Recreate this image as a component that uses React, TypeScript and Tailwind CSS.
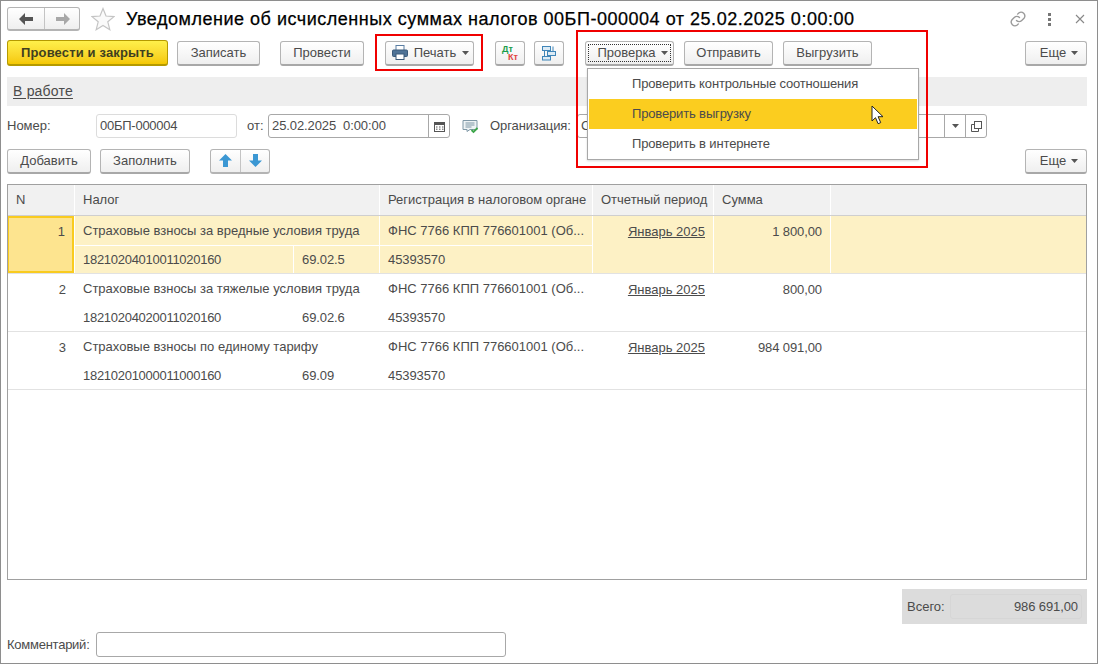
import React from "react";

const Btn = ({ w, children, className = "" }: { w: string; children: React.ReactNode; className?: string }) => (
  <div className={`${w} h-[25px] shrink-0 flex items-center justify-center rounded-[3px] border border-[#b4b4b4] border-b-[2px] border-b-[#a8a8a8] bg-linear-to-b from-white to-[#efefef] text-[#4b4b4b] text-[13px] ${className}`}>
    {children}
  </div>
);
const Caret = ({ className = "ml-[6px]" }: { className?: string }) => (
  <svg width="7" height="4" viewBox="0 0 7 4" className={className}><path d="M0 0h7L3.5 4z" fill="#555" /></svg>
);

const Row = ({ n, name, code, acc, sum, selected }: { n: string; name: string; code: string; acc: string; sum: string; selected?: boolean }) => {
  const bg = selected ? "bg-[#fdf1c5]" : "bg-white";
  const cell = `${bg} flex items-center px-[8px] whitespace-nowrap overflow-hidden`;
  return (
    <div className="grid grid-cols-[66px_218px_85px_212px_120px_116px_1fr] grid-rows-[29px_27px] gap-x-px gap-y-px h-[58px] border-b border-[#e2e2e2] bg-white">
      <div className={`row-span-2 flex justify-end px-[8px] ${selected ? "bg-[#fde48f] border-[2px] border-[#f9cb1f] -ml-px pr-[7px] pt-[4px]" : "pt-[6px]"}`}>{n}</div>
      <div className={`${cell} col-span-2`}>{name}</div>
      <div className={cell}>ФНС 7766 КПП 776601001 (Об...</div>
      <div className={`${bg} row-span-2 px-[8px] pt-[6px] text-right underline underline-offset-[1px]`}>Январь 2025</div>
      <div className={`${bg} row-span-2 px-[8px] pt-[6px] text-right tracking-[-0.1px]`}>{sum}</div>
      <div className={`${bg} row-span-2`} />
      <div className={`${cell} tracking-[-0.28px]`}>{code}</div>
      <div className={`${cell} tracking-[-0.1px]`}>{acc}</div>
      <div className={`${cell} tracking-[-0.1px]`}>45393570</div>
    </div>
  );
};

export default function App() {
  return (
    <div className="relative w-[1098px] h-[664px] overflow-hidden bg-white border border-[#8e8e8e] font-['Liberation_Sans',Arial,sans-serif] text-[13px] text-[#4b4b4b] pl-[6px] pr-[10px] box-border">
      {/* Title */}
      <div className="flex items-center h-[35px] pt-[1px]">
        <div className="flex w-[73px] h-[24px] rounded-[3px] border border-[#b4b4b4] border-b-[2px] bg-linear-to-b from-white to-[#efefef]">
          <div className="w-[37px] flex items-center justify-center border-r border-[#c4c4c4]">
            <svg width="15" height="12" viewBox="0 0 15 12"><path d="M6 0 0 6l6 6V8h8V4H6z" fill="#555" /></svg>
          </div>
          <div className="flex-1 flex items-center justify-center">
            <svg width="15" height="12" viewBox="0 0 15 12"><path d="M9 0l6 6-6 6V8H1V4h8z" fill="#a8a8a8" /></svg>
          </div>
        </div>
        <svg width="24" height="24" viewBox="0 0 24 24" className="ml-[11px]">
          <path d="M12 1.5l3 7.5 8 .6-6.2 5.2 2 7.9L12 18.4l-6.8 4.3 2-7.9L1 9.6 9 9z" fill="#fafafa" stroke="#c4c4c4" strokeWidth="1.2" />
        </svg>
        <div className="ml-[11px] text-[18px] text-black whitespace-nowrap tracking-[0.52px] [-webkit-text-stroke:0.25px_black]">Уведомление об исчисленных суммах налогов 00БП-000004 от 25.02.2025 0:00:00</div>
        <div className="ml-auto flex items-center mr-[2px]">
          <svg width="18" height="18" viewBox="0 0 24 24" fill="none" stroke="#9a9a9a" strokeWidth="1.8" strokeLinecap="round">
            <path d="M10 14a5 5 0 0 0 7 0l3-3a5 5 0 0 0-7-7l-1.5 1.5" />
            <path d="M14 10a5 5 0 0 0-7 0l-3 3a5 5 0 0 0 7 7l1.5-1.5" />
          </svg>
          <div className="ml-[21px] flex flex-col gap-[2px]">
            <div className="w-[3px] h-[3px] bg-[#777]" /><div className="w-[3px] h-[3px] bg-[#777]" /><div className="w-[3px] h-[3px] bg-[#777]" />
          </div>
          <svg width="10" height="10" viewBox="0 0 10 10" className="ml-[24px]"><path d="M1 1l8 8M9 1l-8 8" stroke="#888" strokeWidth="1.1" /></svg>
        </div>
      </div>

      {/* Command bar */}
      <div className="flex items-center h-[28px] mt-[3px]">
        <div className="w-[161px] h-[26px] shrink-0 flex items-center justify-center rounded-[3px] border border-[#b59a00] border-b-[2px] bg-linear-to-b from-[#fff04a] to-[#f5c800] font-bold text-[#3f3f20] text-[13px] tracking-[0.15px]">Провести и закрыть</div>
        <Btn w="w-[83px]" className="ml-[9px]">Записать</Btn>
        <Btn w="w-[84px]" className="ml-[20px]">Провести</Btn>
        <Btn w="w-[89px]" className="ml-[21px] pl-[2px]">
          <svg width="16" height="15" viewBox="0 0 16 15" className="mr-[6px]">
            <rect x="4" y="0.5" width="8" height="5" fill="#fff" stroke="#5b7ea3" />
            <rect x="0.5" y="5" width="15" height="6.5" rx="1" fill="#4f7396" stroke="#3b5a7a" />
            <rect x="4" y="9" width="8" height="5.5" fill="#fff" stroke="#3b5a7a" />
          </svg>
          Печать<Caret className="ml-[6px]" />
        </Btn>
        <Btn w="w-[30px]" className="ml-[21px] relative">
          <span className="absolute left-[6px] top-[2px] text-[9px] leading-[10px] font-bold text-[#1a9c4a]">Дт</span>
          <span className="absolute left-[12px] top-[10px] text-[9px] leading-[10px] font-bold text-[#e0453f]">Кт</span>
        </Btn>
        <Btn w="w-[30px]" className="ml-[9px]">
          <svg width="16" height="16" viewBox="0 0 16 16" fill="none" stroke="#3f85b8">
            <rect x="1.5" y="1.5" width="8" height="4" fill="#dcebf5" />
            <rect x="6.5" y="6.5" width="8" height="4" fill="#dcebf5" />
            <rect x="1.5" y="11.5" width="8" height="3.5" fill="#dcebf5" />
            <path d="M3.5 5.5v6M12 1.5v5" />
          </svg>
        </Btn>
        <Btn w="w-[89px]" className="ml-[21px] relative pl-[6px]">
          <span className="absolute inset-[2px] border border-dotted border-[#333]" />
          Проверка<Caret className="ml-[5px]" />
        </Btn>
        <Btn w="w-[89px]" className="ml-[10px]">Отправить</Btn>
        <Btn w="w-[89px]" className="ml-[10px]">Выгрузить</Btn>
        <Btn w="w-[62px]" className="ml-auto pl-[6px]">Еще<Caret className="ml-[5px]" /></Btn>
      </div>

      {/* Status band */}
      <div className="h-[29px] mt-[10px] bg-[#eeeeee] flex items-center px-[6px] text-[14px]"><span className="underline underline-offset-2 tracking-[0.2px]">В работе</span></div>

      {/* Fields */}
      <div className="flex items-center h-[24px] mt-[8px]">
        <span className="w-[89px]">Номер:</span>
        <div className="w-[141px] h-[24px] rounded-[3px] border border-[#dcdcdc] flex items-center px-[3px] tracking-[-0.25px]">00БП-000004</div>
        <span className="ml-[10px] w-[21px]">от:</span>
        <div className="w-[182px] h-[24px] rounded-[3px] border border-[#a8a8a8] flex items-center pl-[3px]">
          <span className="flex-1 whitespace-pre tracking-[-0.1px]">25.02.2025  0:00:00</span>
          <div className="w-[21px] h-full border-l border-[#a8a8a8] flex items-center justify-center">
            <svg width="11" height="11" viewBox="0 0 11 11"><rect x="0.5" y="1.5" width="10" height="9" fill="none" stroke="#555" /><rect x="0" y="1" width="11" height="3" fill="#555" /><path d="M2 6h1.5M5 6h1.5M8 6h1.5M2 8.2h1.5M5 8.2h1.5M8 8.2h1.5" stroke="#555" /></svg>
          </div>
        </div>
        <svg width="18" height="16" viewBox="0 0 18 16" className="ml-[12px]">
          <path d="M1 2.5h14v9H8l-3 2v-2H1z" fill="#eef3f5" stroke="#7f97a6" />
          <path d="M3.5 5h9M3.5 7h9M3.5 9h6" stroke="#7f97a6" />
          <path d="M9.5 12l2 2 4-4" fill="none" stroke="#3da64a" strokeWidth="1.8" />
        </svg>
        <span className="ml-[10px] w-[87px] tracking-[-0.1px]">Организация:</span>
        <div className="w-[410px] h-[24px] rounded-[3px] border border-[#a8a8a8] flex items-center pl-[3px]">
          <span className="flex-1">С</span>
          <div className="w-[21px] h-full border-l border-[#a8a8a8] flex items-center justify-center"><Caret className="" /></div>
          <div className="w-[21px] h-full border-l border-[#a8a8a8] flex items-center justify-center">
            <svg width="11" height="11" viewBox="0 0 11 11" fill="none" stroke="#555"><rect x="3.5" y="0.5" width="7" height="7" /><path d="M3 3.5H0.5v7h7V8" /></svg>
          </div>
        </div>
      </div>

      {/* Table toolbar */}
      <div className="flex items-center h-[26px] mt-[10px]">
        <Btn w="w-[84px]">Добавить</Btn>
        <Btn w="w-[90px]" className="ml-[9px]">Заполнить</Btn>
        <div className="ml-[20px] flex w-[60px] h-[25px] rounded-[3px] border border-[#b4b4b4] border-b-[2px] bg-linear-to-b from-white to-[#efefef]">
          <div className="w-[30px] flex items-center justify-center border-r border-[#c4c4c4]">
            <svg width="13" height="13" viewBox="0 0 13 13"><path d="M6.5 0L13 6.5H9V13H4V6.5H0z" fill="#3b97d3" /></svg>
          </div>
          <div className="flex-1 flex items-center justify-center">
            <svg width="13" height="13" viewBox="0 0 13 13"><path d="M6.5 13L13 6.5H9V0H4v6.5H0z" fill="#3b97d3" /></svg>
          </div>
        </div>
        <Btn w="w-[62px]" className="ml-auto pl-[6px]">Еще<Caret className="ml-[5px]" /></Btn>
      </div>

      {/* Table */}
      <div className="h-[396px] mt-[10px] border border-[#a0a0a0] overflow-hidden">
        <div className="grid grid-cols-[66px_304px_212px_120px_116px_1fr] gap-x-px h-[31px] border-b border-[#cfcfcf] bg-white">
          {["N", "Налог", "Регистрация в налоговом органе", "Отчетный период", "Сумма", ""].map((t, i) => (
            <div key={i} className="bg-[#f1f1f1] flex items-center px-[8px] pb-px whitespace-nowrap">{t}</div>
          ))}
        </div>
        <Row selected n="1" name="Страховые взносы за вредные условия труда" code="18210204010011020160" acc="69.02.5" sum="1 800,00" />
        <Row n="2" name="Страховые взносы за тяжелые условия труда" code="18210204020011020160" acc="69.02.6" sum="800,00" />
        <Row n="3" name="Страховые взносы по единому тарифу" code="18210201000011000160" acc="69.09" sum="984 091,00" />
      </div>

      {/* Total */}
      <div className="flex justify-end mt-[9px]">
        <div className="w-[185px] h-[35px] bg-[#dcdcdc] flex items-center pl-[5px] pr-[5px]">
          <span className="w-[43px]">Всего:</span>
          <div className="flex-1 h-[25px] rounded-[3px] border border-[#d6d6d6] flex items-center justify-end px-[3px] tracking-[-0.1px]">986 691,00</div>
        </div>
      </div>

      {/* Comment */}
      <div className="flex items-center h-[25px] mt-[8px]">
        <span className="w-[89px] tracking-[-0.25px]">Комментарий:</span>
        <div className="w-[410px] h-[25px] rounded-[3px] border border-[#a8a8a8]" />
      </div>

      {/* Red highlight boxes */}
      <div className="absolute left-[374px] top-[33px] w-[108px] h-[37px] border-[2px] border-[#f00000]" />
      <div className="absolute left-[575px] top-[29px] w-[352px] h-[138px] border-[2px] border-[#f00000]" />

      {/* Dropdown */}
      <div className="absolute left-[586px] top-[67px] w-[332px] h-[92px] bg-white border border-[#a8a8a8] shadow-[0_1px_2px_rgba(0,0,0,0.15)] p-px flex flex-col tracking-[-0.15px]">
        <div className="h-[30px] flex items-center pl-[43px] pb-[1px]">Проверить контрольные соотношения</div>
        <div className="h-[30px] flex items-center pl-[43px] bg-[#fbcd1f]">Проверить выгрузку</div>
        <div className="h-[30px] flex items-center pl-[43px]">Проверить в интернете</div>
      </div>

      {/* Cursor */}
      <svg width="14" height="21" viewBox="0 0 14 21" className="absolute left-[870px] top-[104px]">
        <path d="M1 1v15l3.5-3.3 2.6 6 2.6-1.1-2.6-5.9H12z" fill="#fff" stroke="#222" strokeWidth="1" />
      </svg>
    </div>
  );
}
